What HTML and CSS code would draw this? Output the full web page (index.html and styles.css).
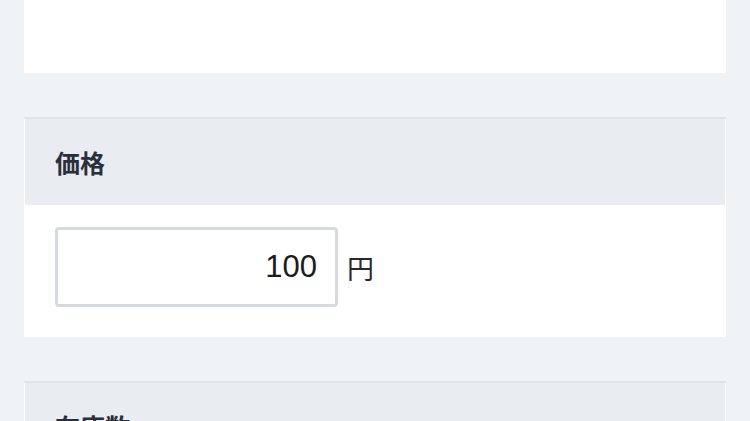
FILE: index.html
```html
<!DOCTYPE html>
<html lang="ja">
<head>
<meta charset="utf-8">
<link rel="stylesheet" href="styles.css">
</head>
<body>
<div class="page">
  <section class="card card-top"></section>
  <section class="card">
    <div class="card-header"><h2 class="card-title">価格</h2></div>
    <div class="card-body">
      <div class="field">
        <input class="num-input" type="text" value="100">
        <span class="unit">円</span>
      </div>
    </div>
  </section>
  <section class="card">
    <div class="card-header"><h2 class="card-title">在庫数</h2></div>
    <div class="card-body">
      <div class="field">
        <input class="num-input" type="text" value="10">
        <span class="unit">個</span>
      </div>
    </div>
  </section>
</div>
</body>
</html>
```
FILE: styles.css
```css
html, body {
  margin: 0;
  padding: 0;
  background: #f0f3f6;
  height: 421px;
  overflow: hidden;
}
body {
  font-family: "Liberation Sans", "Noto Sans CJK JP", sans-serif;
  color: #222;
}
.page {
  display: flex;
  flex-direction: column;
  gap: 44px;
  padding: 0 24px;
}
.card {
  background: #fff;
  border-top: 2px solid #e1e4e8;
  padding: 0 1px;
}
.card-top {
  height: 73px;
  border-top: none;
}
.card-header {
  background: #e9ecf0;
  height: 86px;
  display: flex;
  align-items: center;
  padding-left: 30px;
}
.card-title {
  margin: 0;
  font-family: "Noto Sans CJK JP", sans-serif;
  font-size: 25px;
  font-weight: 700;
  color: #2a303b;
  letter-spacing: 0px;
}
.card-body {
  padding: 22px 30px 30px;
}
.field {
  display: flex;
  align-items: center;
  gap: 9px;
}
.num-input {
  box-sizing: border-box;
  width: 283px;
  height: 80px;
  border: 3px solid #d6d9dd;
  border-radius: 4px;
  padding: 0 18px 0 10px;
  text-align: right;
  font-family: "Liberation Sans", sans-serif;
  font-size: 31px;
  color: #1c1c1c;
  background: #fff;
  outline: none;
}
.unit {
  font-family: "Noto Sans CJK JP", sans-serif;
  font-size: 27px;
  font-weight: 400;
  color: #2a2a2a;
}
```
